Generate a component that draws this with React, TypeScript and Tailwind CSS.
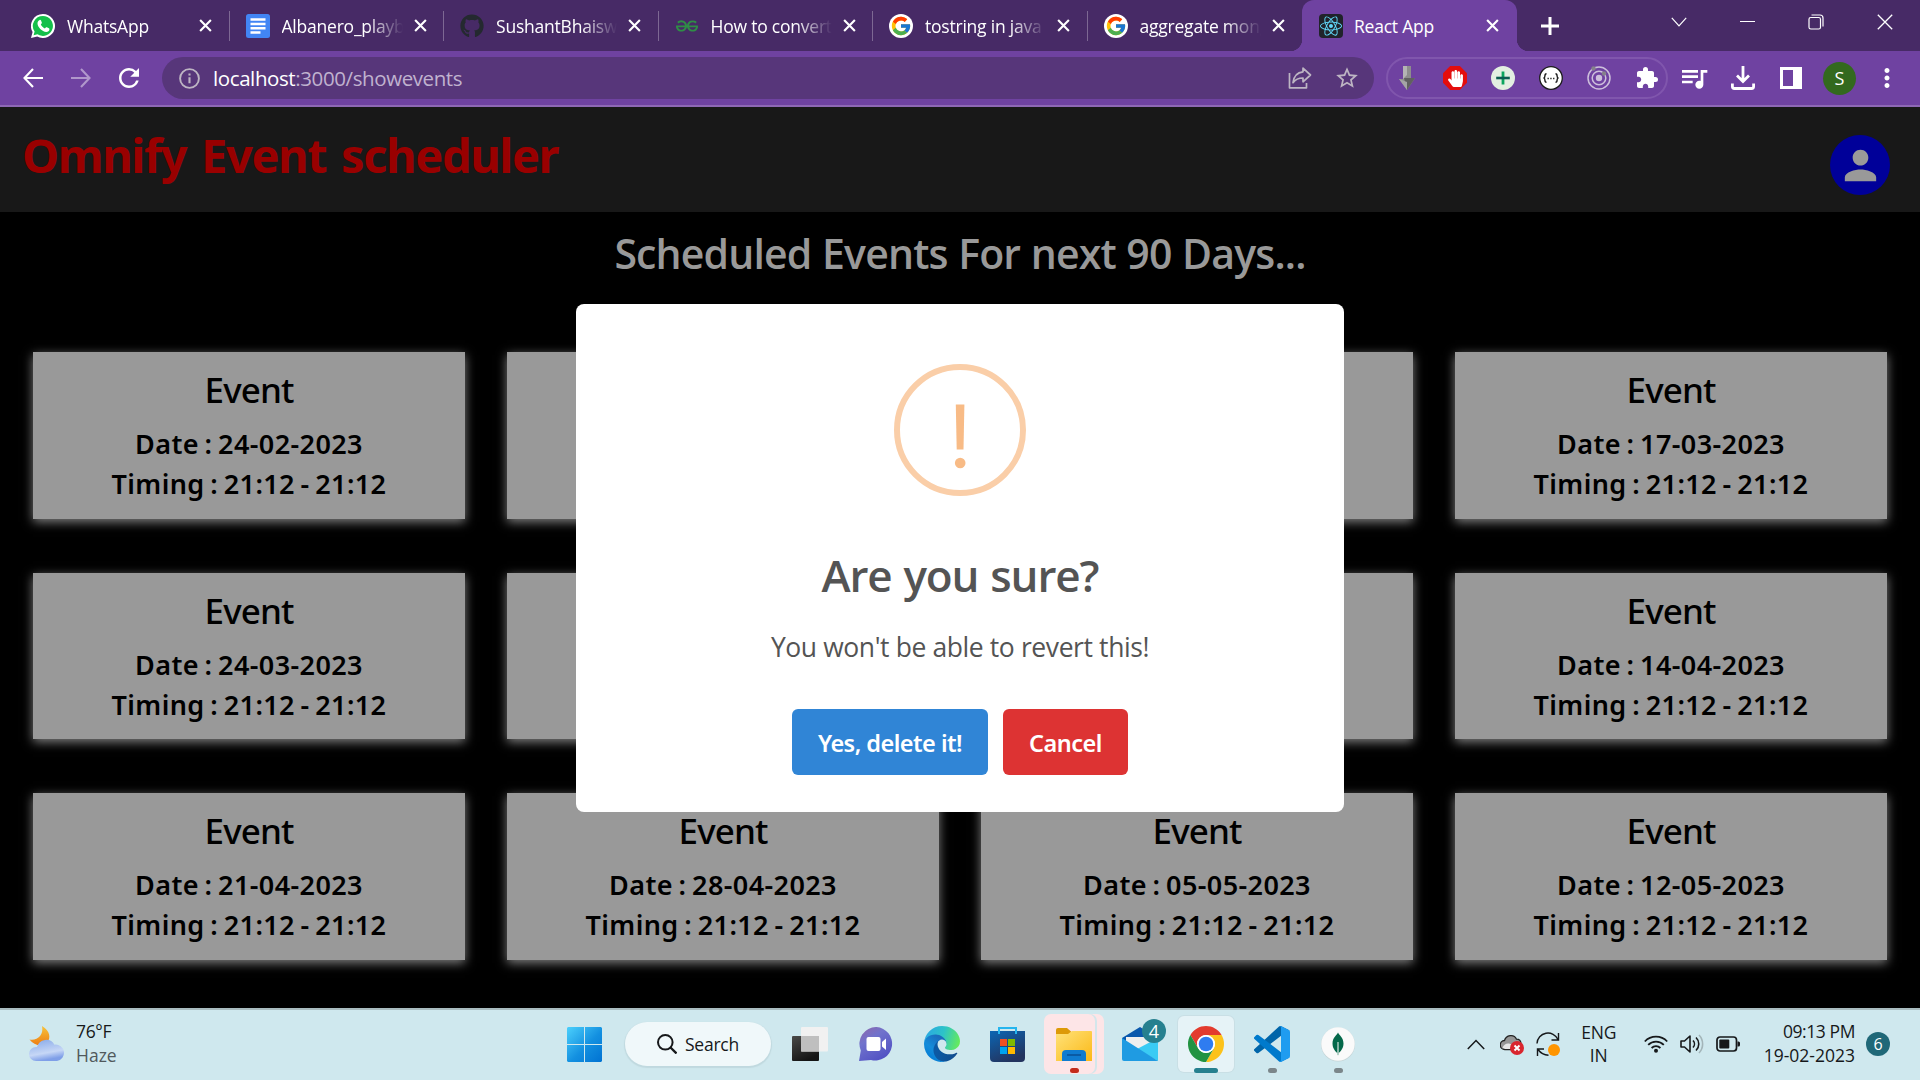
import type { ReactNode } from 'react';
import { FaReact, FaGithub, FaHandPaper } from 'react-icons/fa';
import { FcGoogle } from 'react-icons/fc';
import { SiGeeksforgeeks } from 'react-icons/si';
import { MdPerson, MdQueueMusic, MdStarBorder, MdExtension, MdMoreVert, MdRefresh } from 'react-icons/md';

/* ---------- Browser tab icons ---------- */

function WhatsAppIcon() {
  return (
    <svg viewBox="0 0 24 24" className="-ml-px size-6">
      <path d="M12 0a12 12 0 0 0-10.400 18L0 24l6.200-1.500A12 12 0 1 0 12 0z" fill="#fff" />
      <path d="M12 1.900A10 10 0 0 0 3.600 17.500L2.600 21.300l3.900-1A10 10 0 1 0 12 1.900z" fill="#14c04a" />
      <g transform="translate(5 5) scale(.6)">
        <path
          d="M6.200 1.500C7 1.200 8 1.600 8.400 2.600l1.300 3.200c.3.700.1 1.300-.4 1.900L8 9.200c1.400 3 3.800 5.300 6.800 6.700l1.500-1.700c.5-.6 1.100-.8 1.800-.5l3.400 1.600c.8.400 1 .9.900 1.600-.3 2.800-2.400 4.600-5.200 4.600C10 21 2.500 13.300 2.500 7c0-2.600 1.700-4.800 3.700-5.500z"
          fill="#fff"
        />
      </g>
    </svg>
  );
}

function DocsIcon() {
  return (
    <svg viewBox="0 0 24 24" className="size-6">
      <rect width="24" height="24" rx="2.500" fill="#4285f4" />
      <path d="M4.500 4.200h15v2.500h-15zM4.500 8.700h15v2.500h-15zM4.500 13h15v2.500h-15zM4.500 17.300h10v2.500h-10z" fill="#fff" />
    </svg>
  );
}

function GoogleIcon() {
  return (
    <span className="flex size-6 items-center justify-center rounded-full bg-white">
      <FcGoogle className="size-[22px]" />
    </span>
  );
}

function ReactIcon() {
  return (
    <span className="flex size-6 items-center justify-center rounded-sm bg-[#20232a]">
      <FaReact className="size-[22px] text-[#61dafb]" />
    </span>
  );
}

function Cross({ className }: { className: string }) {
  return (
    <svg viewBox="0 0 14 14" className={className}>
      <path d="M1.200 1.200l11.600 11.600M12.800 1.200L1.200 12.800" stroke="#fff" strokeWidth="2.300" fill="none" />
    </svg>
  );
}

const tabs: { title: string; icon: ReactNode }[] = [
  { title: 'WhatsApp', icon: <WhatsAppIcon /> },
  { title: 'Albanero_playbook', icon: <DocsIcon /> },
  { title: 'SushantBhaiswar', icon: <FaGithub className="size-6 text-[#24292f]" /> },
  { title: 'How to convert', icon: <SiGeeksforgeeks className="size-[22px] text-[#2f8d46]" /> },
  { title: 'tostring in java -', icon: <GoogleIcon /> },
  { title: 'aggregate mongo', icon: <GoogleIcon /> },
];

function TabLabel({ children }: { children: ReactNode }) {
  return (
    <span className="ml-3 w-[121px] overflow-hidden whitespace-nowrap text-[17.5px] leading-7 tracking-[-0.22px] text-white [mask-image:linear-gradient(to_right,black_70%,transparent)]">
      {children}
    </span>
  );
}

function TabStrip() {
  return (
    <div className="flex h-[51px] bg-[#472a66] pl-[15px]">
      {tabs.map((t, i) => (
        <div key={i} className="flex h-[51px] w-[214.5px] shrink-0 items-center pl-[16px]">
          <span className="flex w-6 shrink-0 justify-center">{t.icon}</span>
          <TabLabel>{t.title}</TabLabel>
          <Cross className="ml-[11px] size-[13px]" />
          {i < 5 && <span className="ml-auto h-[30px] w-px bg-[#7d6893]" />}
        </div>
      ))}
      <div className="relative flex h-[51px] w-[215px] shrink-0 items-center rounded-t-xl bg-[#6f42a1] pl-[17px]">
        <span className="absolute bottom-0 -left-3 size-3 bg-[radial-gradient(circle_at_0_0,#472a66_12px,#6f42a1_12.500px)]" />
        <span className="absolute -right-3 bottom-0 size-3 bg-[radial-gradient(circle_at_100%_0,#472a66_12px,#6f42a1_12.500px)]" />
        <ReactIcon />
        <span className="ml-[11px] w-[121px] text-[17.5px] leading-7 tracking-[-0.22px] text-white">React App</span>
        <Cross className="ml-[11px] size-[13px]" />
      </div>
      <div className="flex w-[66px] items-center justify-center">
        <svg viewBox="0 0 18 18" className="size-[18px]">
          <path d="M9 0v18M0 9h18" stroke="#fff" strokeWidth="3" />
        </svg>
      </div>
      <div className="ml-auto flex h-[43px] items-center pr-px">
        <div className="flex w-[68.500px] justify-center">
          <svg viewBox="0 0 16 10" className="w-4 overflow-visible">
            <path d="M.8.800L8 8.800l7.200-8" stroke="#fff" strokeWidth="1.200" fill="none" />
          </svg>
        </div>
        <div className="flex w-[68.500px] justify-center">
          <span className="h-px w-[15px] bg-white" />
        </div>
        <div className="flex w-[68.500px] justify-center">
          <svg viewBox="0 0 16 16" className="size-4" fill="none" stroke="#fff" strokeWidth="1.200">
            <rect x="1" y="3.500" width="11.500" height="11.500" rx="1.800" />
            <path d="M3.500 1h8.500a3 3 0 0 1 3 3v8.500" />
          </svg>
        </div>
        <div className="flex w-[68.500px] justify-center">
          <svg viewBox="0 0 16 16" className="size-4">
            <path d="M.8.800l14.400 14.400M15.200.800L.8 15.200" stroke="#fff" strokeWidth="1.300" />
          </svg>
        </div>
      </div>
    </div>
  );
}

function Arrow({ className }: { className: string }) {
  return (
    <svg viewBox="0 0 20 20" className={className} fill="none" stroke="#fff" strokeWidth="2.100">
      <path d="M10 1L1.500 10l8.500 9M1.500 10H20" />
    </svg>
  );
}

function ExtensionSlot({ children }: { children: ReactNode }) {
  return <span className="flex w-12 justify-center">{children}</span>;
}

function Toolbar() {
  return (
    <div className="flex h-14 items-center border-b-2 border-[#8e68b5] bg-[#6f42a1] pl-[23px]">
      <Arrow className="size-5" />
      <Arrow className="ml-7 size-5 rotate-180 opacity-45" />
      <MdRefresh className="ml-[23px] size-[30px] text-white" />
      <div className="ml-[18px] flex h-[42px] w-[1212px] items-center rounded-full bg-[#57367a] pl-[17px]">
        <svg viewBox="0 0 21 21" className="size-[21px]" fill="none" stroke="#bdb5c3">
          <circle cx="10.500" cy="10.500" r="9.400" strokeWidth="1.900" />
          <path d="M10.500 9.200v6M10.500 5.600v2" strokeWidth="2.100" />
        </svg>
        <p className="ml-[13px] text-[20.5px] leading-8 tracking-[-0.4px] text-[#c0b2cf]">
          <span className="text-white">localhost</span>:3000/showevents
        </p>
        <svg viewBox="0 0 24 22" className="ml-auto w-6" fill="none" stroke="#bdb5c3" strokeWidth="1.700" strokeLinejoin="round">
          <path d="M1.500 6v14.800h17V16" />
          <path d="M15 1.200l7.500 6.800-7.500 6.800V11c-4.500 0-7.500 1.300-10 4.700C5.700 9.800 8.800 5.400 15 4.800z" />
        </svg>
        <MdStarBorder className="mr-[14px] ml-[22px] size-[26px] text-[#bdb5c3]" />
      </div>
      <div className="ml-3 flex h-[42px] w-[282px] items-center rounded-full border-2 border-[#8056ad] pr-px">
        <div className="-ml-[5px] flex">
          <ExtensionSlot>
            <svg viewBox="0 0 16 24" className="h-6">
              <path d="M4 0h8v12h4L8 24 0 13h4z" fill="#8d8d8d" />
              <path d="M4 0h4v9l-4 4z" fill="#b4b4b4" />
              <path d="M5 12l11 0-8 12z" fill="#606060" />
              <path d="M0 13l8 3v8z" fill="#a5a5a5" />
            </svg>
          </ExtensionSlot>
          <ExtensionSlot>
            <span className="flex size-6 items-center justify-center bg-[#e40d0d] [clip-path:polygon(30%_0,70%_0,100%_30%,100%_70%,70%_100%,30%_100%,0_70%,0_30%)]">
              <FaHandPaper className="size-[17px] text-white" />
            </span>
          </ExtensionSlot>
          <ExtensionSlot>
            <svg viewBox="0 0 24 24" className="size-6">
              <circle cx="12" cy="12" r="12" fill="#e3efe1" />
              <path d="M12 5.500v13" stroke="#0ba55e" strokeWidth="2.800" />
              <path d="M5.200 12h13.600" stroke="#0b5d50" strokeWidth="2.600" />
            </svg>
          </ExtensionSlot>
          <ExtensionSlot>
            <svg viewBox="0 0 24 24" className="size-6" fill="none" stroke="#1c1c1c">
              <circle cx="12" cy="12" r="11.300" fill="#fff" strokeWidth="1.300" />
              <path d="M7.500 7.800c-1.600 0-1.600.7-1.600 2.200 0 1.200-.3 1.900-1.400 2 1.100.1 1.400.8 1.400 2 0 1.500 0 2.200 1.600 2.200M16.500 7.800c1.600 0 1.600.7 1.600 2.200 0 1.200.3 1.900 1.400 2-1.100.1-1.400.8-1.400 2 0 1.500 0 2.200-1.600 2.200" strokeWidth="1.400" />
              <path d="M8.500 12.500h1.300M11.300 12.500h1.300M14.100 12.500h1.300" strokeWidth="1.300" />
            </svg>
          </ExtensionSlot>
          <ExtensionSlot>
            <svg viewBox="0 0 24 24" className="size-6" fill="none" stroke="#cdbfdc">
              <circle cx="12" cy="12" r="11" strokeWidth="1.500" />
              <circle cx="12" cy="12" r="6.800" strokeWidth="1.500" />
              <circle cx="12" cy="12" r="3.200" fill="#cdbfdc" stroke="none" />
              <circle cx="6.500" cy="2.500" r="2.200" fill="#85818b" stroke="none" />
              <circle cx="17" cy="7.500" r="2.200" fill="#85818b" stroke="none" />
            </svg>
          </ExtensionSlot>
          <ExtensionSlot>
            <MdExtension className="size-6 text-white" />
          </ExtensionSlot>
        </div>
      </div>
      <MdQueueMusic className="ml-[10px] size-[32px] text-white" />
      <svg viewBox="0 0 24 24" className="ml-[21px] size-6" fill="none" stroke="#fff" strokeWidth="2.800">
        <path d="M12 0v15M6 9.500l6 6 6-6" />
        <path d="M1.400 17.500v3a2 2 0 0 0 2 2h17.200a2 2 0 0 0 2-2v-3" />
      </svg>
      <svg viewBox="0 0 22 22" className="ml-[25px] size-[22px]">
        <path d="M0 0h22v22H0zM3 3v16h10V3z" fill="#fff" fillRule="evenodd" />
      </svg>
      <span className="ml-[21px] flex size-[33px] items-center justify-center rounded-full bg-[#33691e] text-[18px] leading-none text-white">S</span>
      <MdMoreVert className="ml-[16px] size-[30px] text-white" />
    </div>
  );
}

/* ---------- Page ---------- */

const events = [
  '24-02-2023', '03-03-2023', '10-03-2023', '17-03-2023',
  '24-03-2023', '31-03-2023', '07-04-2023', '14-04-2023',
  '21-04-2023', '28-04-2023', '05-05-2023', '12-05-2023',
];

function EventCard({ date }: { date: string }) {
  return (
    <div className="h-[166.5px] bg-[#999] pt-[16px] text-center font-['Noto_Sans',sans-serif] text-black shadow-[0_3px_10px_#808080]">
      <h2 className="text-[35px] leading-[44px] font-medium tracking-[-0.9px]">Event</h2>
      <div className="mt-[12px] text-[27px] leading-[40px] font-semibold tracking-[0.4px] [word-spacing:-1.8px]">
        <p>Date : {date}</p>
        <p>Timing : 21:12 - 21:12</p>
      </div>
    </div>
  );
}

function ConfirmDialog() {
  return (
    <div className="flex h-[508px] w-[768px] flex-col items-center rounded-[8px] bg-white pt-[60px] text-[#545454]">
      <svg viewBox="0 0 132 132" className="size-[132px]">
        <circle cx="66" cy="66" r="63" fill="none" stroke="#facea8" strokeWidth="6" />
        <path d="M61.800 40.500h8.600l-.9 45h-6.800z" fill="#f8bb86" />
        <circle cx="66.200" cy="99" r="5.300" fill="#f8bb86" />
      </svg>
      <h2 className="mt-[49px] text-[44px] leading-[60px] font-semibold tracking-[-1.1px] [word-spacing:1.500px]">Are you sure?</h2>
      <p className="mt-[22px] text-[26.5px] leading-[40px] tracking-[-0.4px]">You won't be able to revert this!</p>
      <div className="mt-[42px] flex gap-[15px] font-['Noto_Sans',sans-serif] text-[23.5px] font-semibold text-white">
        <button className="h-[66px] w-[196px] rounded-md bg-[#3085d6] pt-1 tracking-[-0.52px]">Yes, delete it!</button>
        <button className="h-[66px] w-[125px] rounded-md bg-[#dd3333] pt-1 tracking-[-0.5px]">Cancel</button>
      </div>
    </div>
  );
}

function Page() {
  return (
    <main className="relative h-[901px] overflow-hidden bg-black">
      <header className="flex h-[105px] items-start justify-between bg-[#181818] pr-[30px] pl-[22px]">
        <h1 className="pt-4 font-['Noto_Sans',sans-serif] text-[47px] leading-[64px] font-bold tracking-[-1.4px] [word-spacing:4px] text-[#990000]">
          Omnify Event scheduler
        </h1>
        <span className="mt-[28px] flex size-[60px] items-center justify-center rounded-full bg-[#000099]">
          <MdPerson className="size-[47px] text-[#999]" />
        </span>
      </header>
      <h2 className="mt-[15px] text-center text-[41px] leading-[52px] font-semibold tracking-[-0.84px] [word-spacing:0.7px] text-[#999]">
        Scheduled Events For next 90 Days...
      </h2>
      <div className="mt-[73px] grid grid-cols-4 gap-x-[42px] gap-y-[54px] px-[33px]">
        {events.map((d) => (
          <EventCard key={d} date={d} />
        ))}
      </div>
      <div className="absolute inset-0 flex items-start justify-center pt-[197px]">
        <ConfirmDialog />
      </div>
    </main>
  );
}

/* ---------- Taskbar ---------- */

function WeatherIcon() {
  return (
    <svg viewBox="0 0 36 36" className="size-9">
      <defs>
        <linearGradient id="moon" x1="0" y1="0" x2="0" y2="1">
          <stop offset="0" stopColor="#f6c33c" />
          <stop offset="1" stopColor="#ee7e12" />
        </linearGradient>
        <linearGradient id="cloud" x1="0" y1="0" x2="0.300" y2="1">
          <stop offset="0" stopColor="#86a8e8" />
          <stop offset=".7" stopColor="#c6d7f6" />
          <stop offset="1" stopColor="#7f9fe8" />
        </linearGradient>
      </defs>
      <path d="M13 0c6 3.500 9 9 6.500 14.500C16.500 21 6 21 .5 13.500 8 15 15 9.500 13 0z" fill="url(#moon)" />
      <path d="M7 35a6.800 6.800 0 0 1 0-14h1a9.500 9.500 0 0 1 17.500-2.300A8.200 8.200 0 1 1 28 35z" fill="url(#cloud)" />
    </svg>
  );
}

function WindowsIcon() {
  return (
    <svg viewBox="0 0 35 35" className="size-[35px]">
      <defs>
        <linearGradient id="win" x1="0" y1="0" x2="1" y2="1">
          <stop offset="0" stopColor="#4cd0fc" />
          <stop offset=".55" stopColor="#1390e0" />
          <stop offset="1" stopColor="#0072d2" />
        </linearGradient>
      </defs>
      <path d="M1 0h16v17H0V1zM18 0h16l1 1v16H18zM0 18h17v17H1l-1-1zM18 18h17v16l-1 1H18z" fill="url(#win)" />
    </svg>
  );
}

function TaskViewIcon() {
  return (
    <svg viewBox="0 0 36 36" className="size-9">
      <defs>
        <linearGradient id="tv" x1="0" y1="0" x2="0.500" y2="1">
          <stop offset="0" stopColor="#4a4a48" />
          <stop offset="1" stopColor="#141414" />
        </linearGradient>
      </defs>
      <rect x="0" y="10" width="27" height="25" rx="1" fill="url(#tv)" />
      <rect x="9" y="1" width="27" height="24.500" rx="1" fill="#f1f1f1" />
      <rect x="9" y="10" width="18" height="15.500" fill="#bfbfbf" />
    </svg>
  );
}

function ChatIcon() {
  return (
    <svg viewBox="0 0 34 34" className="size-[34px]">
      <defs>
        <linearGradient id="chat" x1="0" y1="0" x2="0.600" y2="1">
          <stop offset="0" stopColor="#9166a8" />
          <stop offset=".4" stopColor="#7173cc" />
          <stop offset="1" stopColor="#5252c4" />
        </linearGradient>
      </defs>
      <path d="M17.500 0a16.800 16.800 0 1 1-5.500 33L0 34l1.800-10.500A16.800 16.800 0 0 1 17.500 0z" fill="url(#chat)" />
      <rect x="7.500" y="10" width="14" height="14" rx="2" fill="#fff" />
      <path d="M23 15l4-3.500v11.500l-4-3.500z" fill="#fff" />
    </svg>
  );
}

function EdgeIcon() {
  return (
    <svg viewBox="0 0 256 256" className="size-9">
      <defs>
        <linearGradient id="e1" x1="0.200" y1="0.600" x2="1" y2="0.700">
          <stop offset="0" stopColor="#0c59a4" />
          <stop offset="1" stopColor="#114a8b" />
        </linearGradient>
        <linearGradient id="e2" x1="0.700" y1="0.200" x2="0.200" y2="1">
          <stop offset="0" stopColor="#1b6dbd" />
          <stop offset=".5" stopColor="#148cda" />
          <stop offset="1" stopColor="#0078d4" />
        </linearGradient>
        <linearGradient id="e3" x1="0" y1="0.400" x2="1" y2="0.600">
          <stop offset="0" stopColor="#2ba8e4" />
          <stop offset=".5" stopColor="#2dc3c8" />
          <stop offset="1" stopColor="#66eb5b" />
        </linearGradient>
      </defs>
      <path fill="url(#e1)" d="M231 190.500c-3.400 1.800-6.900 3.400-10.500 4.700a101.500 101.500 0 0 1-35.900 6.500c-47.300 0-88.500-32.500-88.500-74.300a31.500 31.500 0 0 1 16.400-27.300c-42.800 1.800-53.800 46.400-53.800 72.500 0 74 68.100 81.400 82.800 81.400 7.900 0 19.800-2.300 27-4.600l1.300-.4a128.300 128.300 0 0 0 66.600-52.800 4 4 0 0 0-5.400-5.700z" />
      <path fill="url(#e2)" d="M105.700 241.400a79.200 79.200 0 0 1-22.700-21.300 80.700 80.700 0 0 1 29.500-120c3.200-1.500 8.500-4.100 15.600-4a32.400 32.400 0 0 1 25.700 13 31.900 31.900 0 0 1 6.300 18.700c0-.2 24.500-79.600-80-79.600-43.900 0-80 41.600-80 78.200a130.200 130.200 0 0 0 12.100 56 128 128 0 0 0 156.400 67 75.500 75.500 0 0 1-62.800-8z" />
      <path fill="url(#e3)" d="M152.300 148.900c-.9 1-3.400 2.500-3.400 5.600 0 2.600 1.700 5.200 4.800 7.300 14.300 10 41.400 8.600 41.500 8.600a59.600 59.600 0 0 0 30.300-8.300 61.400 61.400 0 0 0 30.400-52.900c.3-22.400-8-37.300-11.300-43.900C223.500 23.900 177.700 0 128 0A128 128 0 0 0 0 126.200c.5-36.500 36.800-66 80-66 3.500 0 23.500.3 42 10.100 16.300 8.600 24.900 19 30.800 29.200 6.200 10.700 7.300 24.100 7.300 29.500 0 5.300-2.700 13.300-7.800 19.900z" />
    </svg>
  );
}

function StoreIcon() {
  return (
    <svg viewBox="0 0 35 35" className="mr-px size-[35px]">
      <defs>
        <linearGradient id="store" x1="0" y1="0" x2="0.500" y2="1">
          <stop offset="0" stopColor="#0b66b4" />
          <stop offset="1" stopColor="#23345f" />
        </linearGradient>
      </defs>
      <path d="M9 7V1h17v6" fill="none" stroke="#25b5ee" strokeWidth="2" />
      <path d="M0 4h35v27a4 4 0 0 1-4 4H4a4 4 0 0 1-4-4z" fill="url(#store)" />
      <path d="M9 4v3M26 4v3" stroke="#25b5ee" strokeWidth="2" />
      <path d="M10 12h7v7h-7z" fill="#f25022" />
      <path d="M18 12h7v7h-7z" fill="#7fba00" />
      <path d="M10 20h7v7h-7z" fill="#00a4ef" />
      <path d="M18 20h7v7h-7z" fill="#ffb900" />
    </svg>
  );
}

function FolderIcon() {
  return (
    <svg viewBox="0 0 36 33" className="w-9">
      <defs>
        <linearGradient id="folder" x1="0" y1="0" x2="1" y2="1">
          <stop offset="0" stopColor="#ffe27a" />
          <stop offset="1" stopColor="#fbb917" />
        </linearGradient>
      </defs>
      <path d="M0 2a2 2 0 0 1 2-2h9l4 3.500V8H0z" fill="#dd9a08" />
      <path d="M0 6h12l4-3h19a1 1 0 0 1 1 1v29H0z" fill="url(#folder)" />
      <path d="M6 33v-7a4 4 0 0 1 4-4h16a4 4 0 0 1 4 4v7z" fill="#0f7bd0" />
      <path d="M11 27h14" stroke="#0a4f96" strokeWidth="1.500" />
    </svg>
  );
}

function MailIcon() {
  return (
    <svg viewBox="0 0 36 34" className="w-9">
      <path d="M0 11L18 0l18 11v10H0z" fill="#0a58ad" />
      <path d="M4 10h28v12H4z" fill="#efefef" />
      <path d="M36 11L15 22l21 12z" fill="#3acbf4" />
      <path d="M0 11l36 23H2a2 2 0 0 1-2-2z" fill="#1f9be2" />
    </svg>
  );
}

function ChromeIcon() {
  return (
    <svg viewBox="0 0 48 48" className="size-9">
      <path d="M24 12h20.780A24 24 0 0 0 3.220 12L13.610 30A12 12 0 0 1 24 12z" fill="#e33b2e" />
      <path d="M34.390 30L24 48A24 24 0 0 0 44.780 12H24a12 12 0 0 1 10.390 18z" fill="#fcc21b" />
      <path d="M13.610 30L3.220 12A24 24 0 0 0 24 48l10.390-18a12 12 0 0 1-20.780 0z" fill="#229342" />
      <circle cx="24" cy="24" r="12" fill="#fff" />
      <circle cx="24" cy="24" r="9.700" fill="#2f7cf0" />
    </svg>
  );
}

function CodeIcon() {
  return (
    <svg viewBox="0 0 100 100" className="size-9">
      <path fill="#0065a9" d="M96.460 10.800L75.860.880a6.230 6.230 0 0 0-7.110 1.200L1.300 63.580a4.170 4.170 0 0 0 0 6.170l5.510 5a4.170 4.170 0 0 0 5.320.240l81.230-61.620C96.090 11.300 100 13.250 100 16.670v-.240a6.250 6.250 0 0 0-3.540-5.630z" />
      <path fill="#007acc" d="M96.460 89.200l-20.600 9.920a6.230 6.230 0 0 1-7.110-1.200L1.300 36.420a4.170 4.170 0 0 1 0-6.170l5.510-5a4.170 4.170 0 0 1 5.320-.240l81.230 61.620c2.730 2.070 6.640.120 6.640-3.300v.240a6.250 6.250 0 0 1-3.540 5.630z" />
      <path fill="#1f9cf0" d="M75.860 99.130a6.230 6.230 0 0 1-7.110-1.210c2.310 2.300 6.250.670 6.250-2.590V4.670c0-3.260-3.940-4.890-6.250-2.590a6.230 6.230 0 0 1 7.110-1.210l20.600 9.910A6.250 6.250 0 0 1 100 16.410v67.180a6.250 6.250 0 0 1-3.540 5.630z" />
    </svg>
  );
}

function MongoIcon() {
  return (
    <svg viewBox="0 0 34 34" className="size-[34px] overflow-visible">
      <circle cx="17" cy="17.500" r="17" fill="#c5d4d6" />
      <circle cx="17" cy="17" r="16.700" fill="#fafafa" />
      <path d="M17 5.500c1 2.500 5.500 5 5.500 11 0 5-3 8-5 9.800V28h-1v-1.700c-2-1.800-5-4.800-5-9.800 0-6 4.500-8.500 5.500-11z" fill="#04684a" />
      <path d="M17 15l.5 13h-1z" stroke="#c2d8cf" strokeWidth=".8" fill="none" />
    </svg>
  );
}

function Slot({ children, pill }: { children: ReactNode; pill?: string }) {
  return (
    <div className="relative flex h-[72px] w-[66px] items-center justify-center">
      {children}
      {pill && <span className={`absolute bottom-[7px] h-[5px] rounded-full ${pill}`} />}
    </div>
  );
}

function Taskbar() {
  return (
    <footer className="flex h-[72px] items-center bg-[#cfe8ee] text-[17.5px] text-[#16181a] shadow-[inset_0_2px_0_#a9bcc0]">
      <div className="flex w-[567px] items-center pl-[29px]">
        <WeatherIcon />
        <div className="ml-[11px] pb-0.5 leading-6">
          <p className="tracking-[-0.35px]">76°F</p>
          <p className="text-[#51595c]">Haze</p>
        </div>
      </div>
      <WindowsIcon />
      <div className="ml-[23px] flex h-11 w-[146px] items-center rounded-full bg-[#f0f8fa] pl-8 shadow-[0_1px_1px_1px_#c0d9df]">
        <svg viewBox="0 0 20 20" className="size-5" fill="none" stroke="#16181a" strokeWidth="2">
          <circle cx="8.300" cy="8.300" r="7.300" />
          <path d="M13.500 13.500l6 6" strokeWidth="2.300" />
        </svg>
        <span className="ml-2 tracking-[-0.25px]">Search</span>
      </div>
      <div className="ml-[6px] flex">
        <Slot><TaskViewIcon /></Slot>
        <Slot><ChatIcon /></Slot>
        <Slot><EdgeIcon /></Slot>
        <Slot><StoreIcon /></Slot>
        <Slot>
          <span className="absolute top-[6px] left-[12px] h-[60px] w-[51px] rounded-r-[7px] bg-[#fde5e7]" />
          <span className="absolute top-[6px] left-[3px] h-[60px] w-[51px] rounded-[7px] bg-[#fde5e7] shadow-[2px_0_0_#d3e6eb]" />
          <span className="relative"><FolderIcon /></span>
          <span className="absolute bottom-[7px] h-[5px] w-[9px] rounded-full bg-[#c42b1c]" />
        </Slot>
        <Slot>
          <MailIcon />
          <span className="absolute top-[11px] left-[35px] flex size-6 items-center justify-center rounded-full bg-[#26808f] text-[18px] leading-none text-white">4</span>
        </Slot>
        <Slot>
          <span className="absolute top-2 left-[5px] size-14 rounded-md bg-[#e6f3f7] shadow-[0_0_0_1px_#c9dfe5]" />
          <span className="relative"><ChromeIcon /></span>
          <span className="absolute bottom-[7px] h-[5px] w-6 rounded-full bg-[#26808f]" />
        </Slot>
        <Slot pill="w-[9px] bg-[#7b868a]"><CodeIcon /></Slot>
        <Slot pill="w-[9px] bg-[#7b868a]"><MongoIcon /></Slot>
      </div>
      <div className="ml-auto flex items-center pr-[30px]">
        <svg viewBox="0 0 18 11" className="w-[18px]">
          <path d="M.8 10L9 1.500l8.200 8.500" fill="none" stroke="#16181a" strokeWidth="1.500" />
        </svg>
        <svg viewBox="0 0 24 22" className="ml-[15px] w-6">
          <path d="M5 16.500a4.500 4.500 0 0 1-.5-9C6 2 14 .5 16.500 6.200c3 0 4.500 2 4.500 5 0 3-1.500 5.300-4 5.300z" fill="#969696" stroke="#222" strokeWidth="1.300" />
          <path d="M2.500 14.500C5 10 8 9.500 13 12l-3 4H5z" fill="#e6e6e6" />
          <circle cx="17" cy="15" r="7" fill="#d9262e" />
          <path d="M14.500 12.500l5 5M19.500 12.500l-5 5" stroke="#fff" strokeWidth="1.900" />
        </svg>
        <svg viewBox="0 0 24 24" className="ml-3 size-6" fill="none" stroke="#16181a" strokeWidth="1.400">
          <path d="M1 11.500A11 11 0 0 1 22 7.500M22.500 1v7h-7M8 17H1.500v7M2 17.500c2.500 3.500 6 5.500 10.500 5.700" />
          <circle cx="18" cy="18" r="6" fill="#ff9500" stroke="none" />
        </svg>
        <div className="ml-[21px] w-[36px] text-center leading-[23px]">
          <p className="tracking-[-0.2px]">ENG</p>
          <p>IN</p>
        </div>
        <svg viewBox="0 0 24 18" className="ml-[27px] w-6" fill="none" stroke="#16181a" strokeWidth="1.800">
          <path d="M.8 6.500a15.500 15.500 0 0 1 22.400 0M4.200 9.800a11 11 0 0 1 15.600 0M7.600 13a6.300 6.300 0 0 1 8.800 0" />
          <circle cx="12" cy="15.800" r="2" fill="#16181a" stroke="none" />
        </svg>
        <svg viewBox="0 0 24 20" className="ml-3 w-6" fill="none" stroke="#16181a" strokeWidth="1.600">
          <path d="M1 7h3.500L10 2v16l-5.500-5H1z" strokeLinejoin="round" />
          <path d="M13 6.500a5 5 0 0 1 0 7M16 3.500a9 9 0 0 1 0 13" />
          <path d="M19 1a13 13 0 0 1 0 18" stroke="#a3b5b9" />
        </svg>
        <svg viewBox="0 0 24 16" className="ml-3 w-6">
          <rect x="1" y="1" width="19.500" height="14" rx="3" fill="none" stroke="#16181a" strokeWidth="1.700" />
          <rect x="3.300" y="3.500" width="10" height="9" rx="1" fill="#16181a" />
          <path d="M21.500 5.500h1a1.500 1.500 0 0 1 1.500 1.500v2a1.500 1.500 0 0 1-1.500 1.500h-1z" fill="#16181a" />
        </svg>
        <div className="ml-6 pb-0.5 text-right leading-6">
          <p className="tracking-[-0.42px]">09:13 PM</p>
          <p>19-02-2023</p>
        </div>
        <span className="ml-[11px] flex size-6 items-center justify-center rounded-full bg-[#206878] text-[16px] leading-none text-white">6</span>
      </div>
    </footer>
  );
}

export default function App() {
  return (
    <div className="flex h-[1080px] w-[1920px] flex-col overflow-hidden font-['Open_Sans','Noto_Sans',sans-serif]">
      <TabStrip />
      <Toolbar />
      <Page />
      <Taskbar />
    </div>
  );
}
